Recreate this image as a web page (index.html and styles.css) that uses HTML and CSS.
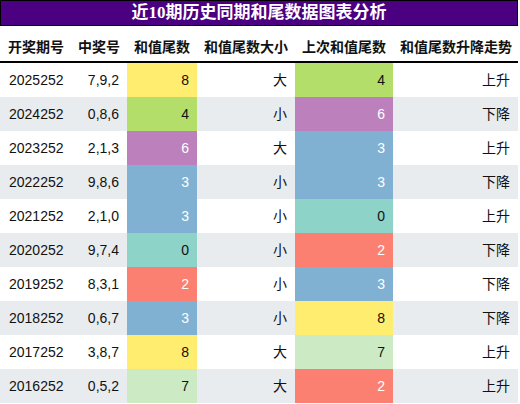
FILE: index.html
```html
<!DOCTYPE html>
<html lang="zh-CN">
<head>
    <meta charset="UTF-8">
    <title>近10期历史同期和尾数据图表分析</title>
    <link rel="stylesheet" href="styles.css">
</head>
<body>
    <div class="title">近10期历史同期和尾数据图表分析</div>
    <table class="chart">
        <colgroup>
            <col class="c-issue">
            <col class="c-win">
            <col class="c-tail">
            <col class="c-size">
            <col class="c-last">
            <col class="c-trend">
        </colgroup>
        <thead>
            <tr>
                <th>开奖期号</th>
                <th>中奖号</th>
                <th>和值尾数</th>
                <th>和值尾数大小</th>
                <th>上次和值尾数</th>
                <th>和值尾数升降走势</th>
            </tr>
        </thead>
        <tbody>
            <tr>
                <td class="left">2025252</td><td>7,9,2</td>
                <td class="n8">8</td><td>大</td>
                <td class="n4">4</td><td>上升</td>
            </tr>
            <tr>
                <td class="left">2024252</td><td>0,8,6</td>
                <td class="n4">4</td><td>小</td>
                <td class="n6">6</td><td>下降</td>
            </tr>
            <tr>
                <td class="left">2023252</td><td>2,1,3</td>
                <td class="n6">6</td><td>大</td>
                <td class="n3">3</td><td>上升</td>
            </tr>
            <tr>
                <td class="left">2022252</td><td>9,8,6</td>
                <td class="n3">3</td><td>小</td>
                <td class="n3">3</td><td>下降</td>
            </tr>
            <tr>
                <td class="left">2021252</td><td>2,1,0</td>
                <td class="n3">3</td><td>小</td>
                <td class="n0">0</td><td>上升</td>
            </tr>
            <tr>
                <td class="left">2020252</td><td>9,7,4</td>
                <td class="n0">0</td><td>小</td>
                <td class="n2">2</td><td>下降</td>
            </tr>
            <tr>
                <td class="left">2019252</td><td>8,3,1</td>
                <td class="n2">2</td><td>小</td>
                <td class="n3">3</td><td>下降</td>
            </tr>
            <tr>
                <td class="left">2018252</td><td>0,6,7</td>
                <td class="n3">3</td><td>小</td>
                <td class="n8">8</td><td>下降</td>
            </tr>
            <tr>
                <td class="left">2017252</td><td>3,8,7</td>
                <td class="n8">8</td><td>大</td>
                <td class="n7">7</td><td>上升</td>
            </tr>
            <tr>
                <td class="left">2016252</td><td>0,5,2</td>
                <td class="n7">7</td><td>大</td>
                <td class="n2">2</td><td>上升</td>
            </tr>
        </tbody>
    </table>
</body>
</html>
```

FILE: styles.css
```css
* {
    box-sizing: border-box;
}
body {
    margin: 0;
    background: #fff;
    font-family: "Liberation Sans", Arial, "Noto Sans CJK SC", sans-serif;
    color: #111;
}
.title {
    width: 518px;
    height: 26px;
    background-color: #4B0082;
    border: 1px solid #000;
    color: #fff;
    font-family: "Liberation Serif", "Noto Sans CJK SC", serif;
    font-weight: bold;
    font-size: 17px;
    line-height: 23px;
    text-align: center;
}
.chart {
    width: 518px;
    table-layout: fixed;
    border-collapse: separate;
    border-spacing: 0;
    font-size: 14px;
}
.c-issue { width: 71px; }
.c-win { width: 56px; }
.c-tail { width: 70px; }
.c-size { width: 98px; }
.c-last { width: 98px; }
.c-trend { width: 125px; }
.chart th {
    font-family: "Noto Sans CJK SC", sans-serif;
    font-weight: bold;
    text-align: left;
    white-space: nowrap;
    line-height: 20px;
    padding: 10px 0 5px 7px;
    border-bottom: 2px solid #000;
    color: #111;
}
.chart th:first-child {
    padding-left: 8px;
}
.chart td {
    line-height: 20px;
    padding: 7px 8px;
    text-align: right;
    white-space: nowrap;
}
.chart td.left {
    text-align: left;
    padding-left: 9px;
}
.chart tbody tr:nth-child(even) {
    background-color: #E9ECEF;
}
.n0 { background-color: #8DD3C7; }
.n2 { background-color: #FB8072; color: #fff; }
.n3 { background-color: #80B1D3; color: #fff; }
.n4 { background-color: #B3DE69; }
.n6 { background-color: #BC80BD; color: #fff; }
.n7 { background-color: #CCEBC5; }
.n8 { background-color: #FFED6F; }
```
